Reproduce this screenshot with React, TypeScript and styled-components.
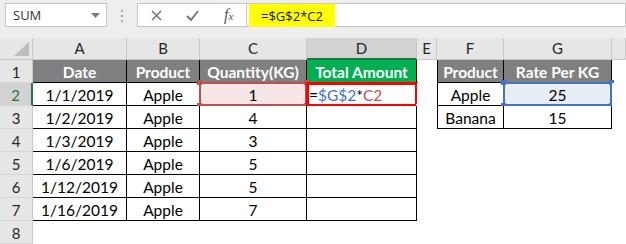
import * as React from "react";
import styled, { createGlobalStyle } from "styled-components";

const GlobalStyle = createGlobalStyle`
  body {
    margin: 0;
    background: #ffffff;
  }
`;

const colour = {
  chrome: "#eeeeee",
  header: "#e6e6e6",
  headerActive: "#d2d2d2",
  headerLine: "#c8c8c8",
  excelGreen: "#217346",
  tableGray: "#808080",
  totalGreen: "#00b050",
  refRed: "#c0504d",
  refBlue: "#4472c4",
};

const Sheet = styled.div`
  width: 626px;
  height: 244px;
  overflow: hidden;
  background: #ffffff;
  font-family: Lato, "Open Sans", sans-serif;
`;

const Toolbar = styled.div`
  height: 38px;
  box-sizing: border-box;
  padding: 3px 0 0 5px;
  background: ${colour.chrome};
  display: flex;
  align-items: flex-start;
`;

const NameBox = styled.div`
  width: 102px;
  height: 24px;
  box-sizing: border-box;
  border: 1px solid #c6c6c6;
  background: #ffffff;
  display: flex;
  align-items: center;
  justify-content: space-between;
  padding: 0 6px 0 7px;
  font-family: "Open Sans", sans-serif;
  font-size: 13px;
  color: #333333;
`;

const Grip = styled.div`
  margin: 7px 0 0 14px;
  display: flex;
  flex-direction: column;
  gap: 3px;
  span {
    width: 2px;
    height: 2px;
    background: #a8a8a8;
  }
`;

const FormulaButtons = styled.div`
  margin-left: 14px;
  width: 110px;
  height: 24px;
  box-sizing: border-box;
  border: 1px solid #c6c6c6;
  background: #ffffff;
  display: flex;
  align-items: center;
  padding-left: 13px;
  gap: 24px;
  color: #777777;
`;

const FxLabel = styled.span`
  font-family: "Liberation Serif", serif;
  font-style: italic;
  font-size: 16px;
  color: #555555;
  margin-left: 1px;
  sub {
    font-size: 11px;
    vertical-align: baseline;
  }
`;

const FormulaInput = styled.div`
  flex: 1;
  height: 24px;
  box-sizing: border-box;
  border: 1px solid #c6c6c6;
  border-left: none;
  background: #ffffff;
  padding: 0 0 0 2px;
  display: flex;
`;

const FormulaHighlight = styled.span`
  background: #ffff00;
  height: 23px;
  padding: 0 12px;
  display: flex;
  align-items: center;
  font-family: "Open Sans", sans-serif;
  font-size: 13px;
  color: #111111;
`;

const Grid = styled.div`
  display: grid;
  grid-template-columns: 33px 94px 73px 107px 110px 20px 67px 108px 1fr;
  grid-template-rows: 22px repeat(8, 23px);
`;

const Corner = styled.div`
  background: ${colour.header};
  border-right: 1px solid ${colour.headerLine};
  border-bottom: 1px solid ${colour.headerLine};
  box-sizing: border-box;
  display: flex;
  align-items: flex-end;
  justify-content: flex-end;
  padding: 0 3px 3px 0;
`;

const ColHead = styled.div<{ $active?: boolean }>`
  box-sizing: border-box;
  background: ${(p) => (p.$active ? colour.headerActive : colour.header)};
  border-right: 1px solid ${colour.headerLine};
  border-bottom: ${(p) =>
    p.$active ? `2px solid ${colour.excelGreen}` : `1px solid ${colour.headerLine}`};
  display: flex;
  align-items: center;
  justify-content: center;
  font-size: 15px;
  color: #262626;
  padding-bottom: ${(p) => (p.$active ? "1px" : "2px")};
`;

const RowHead = styled.div<{ $active?: boolean }>`
  box-sizing: border-box;
  background: ${(p) => (p.$active ? colour.headerActive : colour.header)};
  border-right: ${(p) =>
    p.$active ? `2px solid ${colour.excelGreen}` : `1px solid ${colour.headerLine}`};
  border-bottom: 1px solid #d6d6d6;
  display: flex;
  align-items: center;
  justify-content: center;
  padding-top: 2px;
  font-size: 15px;
  color: ${(p) => (p.$active ? colour.excelGreen : "#262626")};
`;

type Tone = "plain" | "head" | "total" | "picked" | "rate";

const toneBg: Record<Tone, string> = {
  plain: "#ffffff",
  head: colour.tableGray,
  total: colour.totalGreen,
  picked: "#f7e6e6",
  rate: "#e8eef8",
};

const Cell = styled.div<{ $tone?: Tone; $boxed?: boolean; $leftEdge?: boolean; $align?: string }>`
  position: relative;
  box-sizing: border-box;
  background: ${(p) => toneBg[p.$tone ?? "plain"]};
  border-right: ${(p) => (p.$boxed ? "1px solid #000" : "none")};
  border-bottom: ${(p) => (p.$boxed ? "1px solid #000" : "none")};
  border-left: ${(p) => (p.$leftEdge ? "1px solid #000" : "none")};
  display: flex;
  align-items: flex-end;
  justify-content: ${(p) => p.$align ?? "center"};
  padding: 0 2px 0;
  font-size: 15.5px;
  line-height: 20px;
  white-space: nowrap;
  color: ${(p) => (p.$tone === "head" || p.$tone === "total" ? "#ffffff" : "#000000")};
  font-weight: ${(p) => (p.$tone === "head" || p.$tone === "total" ? 700 : 400)};
`;

const Frame = styled.div<{ $color: string; $width: number; $grow?: number }>`
  position: absolute;
  left: -1px;
  top: -1px;
  right: ${(p) => -1 - (p.$grow ?? 0)}px;
  bottom: ${(p) => -1 - (p.$grow ?? 0)}px;
  border: ${(p) => p.$width}px solid ${(p) => p.$color};
  pointer-events: none;
`;

const Handle = styled.span<{ $color: string; $x: "left" | "right"; $y: "top" | "bottom" }>`
  position: absolute;
  width: 5px;
  height: 5px;
  background: ${(p) => p.$color};
  ${(p) => p.$x}: -4px;
  ${(p) => p.$y}: -4px;
`;

const FillHandle = styled.span`
  position: absolute;
  right: -6px;
  bottom: -5px;
  width: 4px;
  height: 4px;
  background: ${colour.excelGreen};
  border-left: 1px solid #fff;
  border-top: 1px solid #fff;
`;

const Ref = styled.span<{ $color?: string }>`
  color: ${(p) => p.$color ?? "#000"};
`;

const HandledFrame: React.FC<{ color: string }> = ({ color }) => (
  <Frame $color={color} $width={2}>
    <Handle $color={color} $x="left" $y="top" />
    <Handle $color={color} $x="right" $y="top" />
    <Handle $color={color} $x="left" $y="bottom" />
    <Handle $color={color} $x="right" $y="bottom" />
  </Frame>
);

const orders: [string, string, number][] = [
  ["1/1/2019", "Apple", 1],
  ["1/2/2019", "Apple", 4],
  ["1/3/2019", "Apple", 3],
  ["1/6/2019", "Apple", 5],
  ["1/12/2019", "Apple", 5],
  ["1/16/2019", "Apple", 7],
];

const rates: [string, number][] = [
  ["Apple", 25],
  ["Banana", 15],
];

const letters = ["A", "B", "C", "D", "E", "F", "G", ""];

export default function App() {
  return (
    <Sheet>
      <GlobalStyle />
      <Toolbar>
        <NameBox>
          SUM
          <svg width="9" height="5" viewBox="0 0 9 5">
            <path d="M0 0h9L4.5 5z" fill="#7a7a7a" />
          </svg>
        </NameBox>
        <Grip>
          <span />
          <span />
          <span />
        </Grip>
        <FormulaButtons>
          <svg width="11" height="11" viewBox="0 0 11 11">
            <path d="M1 1l9 9M10 1l-9 9" stroke="#7a7a7a" strokeWidth="1.6" />
          </svg>
          <svg width="13" height="11" viewBox="0 0 13 11">
            <path d="M1 6l4 4 7-9" stroke="#7a7a7a" strokeWidth="2" fill="none" />
          </svg>
          <FxLabel>
            f<sub>x</sub>
          </FxLabel>
        </FormulaButtons>
        <FormulaInput>
          <FormulaHighlight>=$G$2*C2</FormulaHighlight>
        </FormulaInput>
      </Toolbar>

      <Grid>
        <Corner>
          <svg width="15" height="14" viewBox="0 0 15 14">
            <path d="M15 0v14H0z" fill="#bdbdbd" />
          </svg>
        </Corner>
        {letters.map((letter, i) => (
          <ColHead key={i} $active={letter === "D"}>
            {letter}
          </ColHead>
        ))}

        <RowHead>1</RowHead>
        <Cell $tone="head" $boxed>Date</Cell>
        <Cell $tone="head" $boxed>Product</Cell>
        <Cell $tone="head" $boxed>Quantity(KG)</Cell>
        <Cell $tone="total" $boxed>Total Amount</Cell>
        <Cell />
        <Cell $tone="head" $boxed $leftEdge>Product</Cell>
        <Cell $tone="head" $boxed>Rate Per KG</Cell>
        <Cell />

        {orders.map(([date, product, qty], i) => {
          const row = i + 2;
          const rate = rates[i];
          return (
            <React.Fragment key={row}>
              <RowHead $active={row === 2}>{row}</RowHead>
              <Cell $boxed>{date}</Cell>
              <Cell $boxed>{product}</Cell>
              <Cell $boxed $tone={row === 2 ? "picked" : "plain"}>
                {qty}
                {row === 2 && <HandledFrame color={colour.refRed} />}
              </Cell>
              <Cell $boxed $align="flex-start">
                {row === 2 && (
                  <>
                    <Ref>=</Ref>
                    <Ref $color={colour.refBlue}>$G$2</Ref>
                    <Ref>*</Ref>
                    <Ref $color={colour.refRed}>C2</Ref>
                    <Frame $color="#ff0000" $width={3} $grow={1}>
                      <FillHandle />
                    </Frame>
                  </>
                )}
              </Cell>
              <Cell />
              {rate ? (
                <>
                  <Cell $boxed $leftEdge>{rate[0]}</Cell>
                  <Cell $boxed $tone={row === 2 ? "rate" : "plain"}>
                    {rate[1]}
                    {row === 2 && <HandledFrame color={colour.refBlue} />}
                  </Cell>
                </>
              ) : (
                <>
                  <Cell />
                  <Cell />
                </>
              )}
              <Cell />
            </React.Fragment>
          );
        })}

        <RowHead>8</RowHead>
      </Grid>
    </Sheet>
  );
}
